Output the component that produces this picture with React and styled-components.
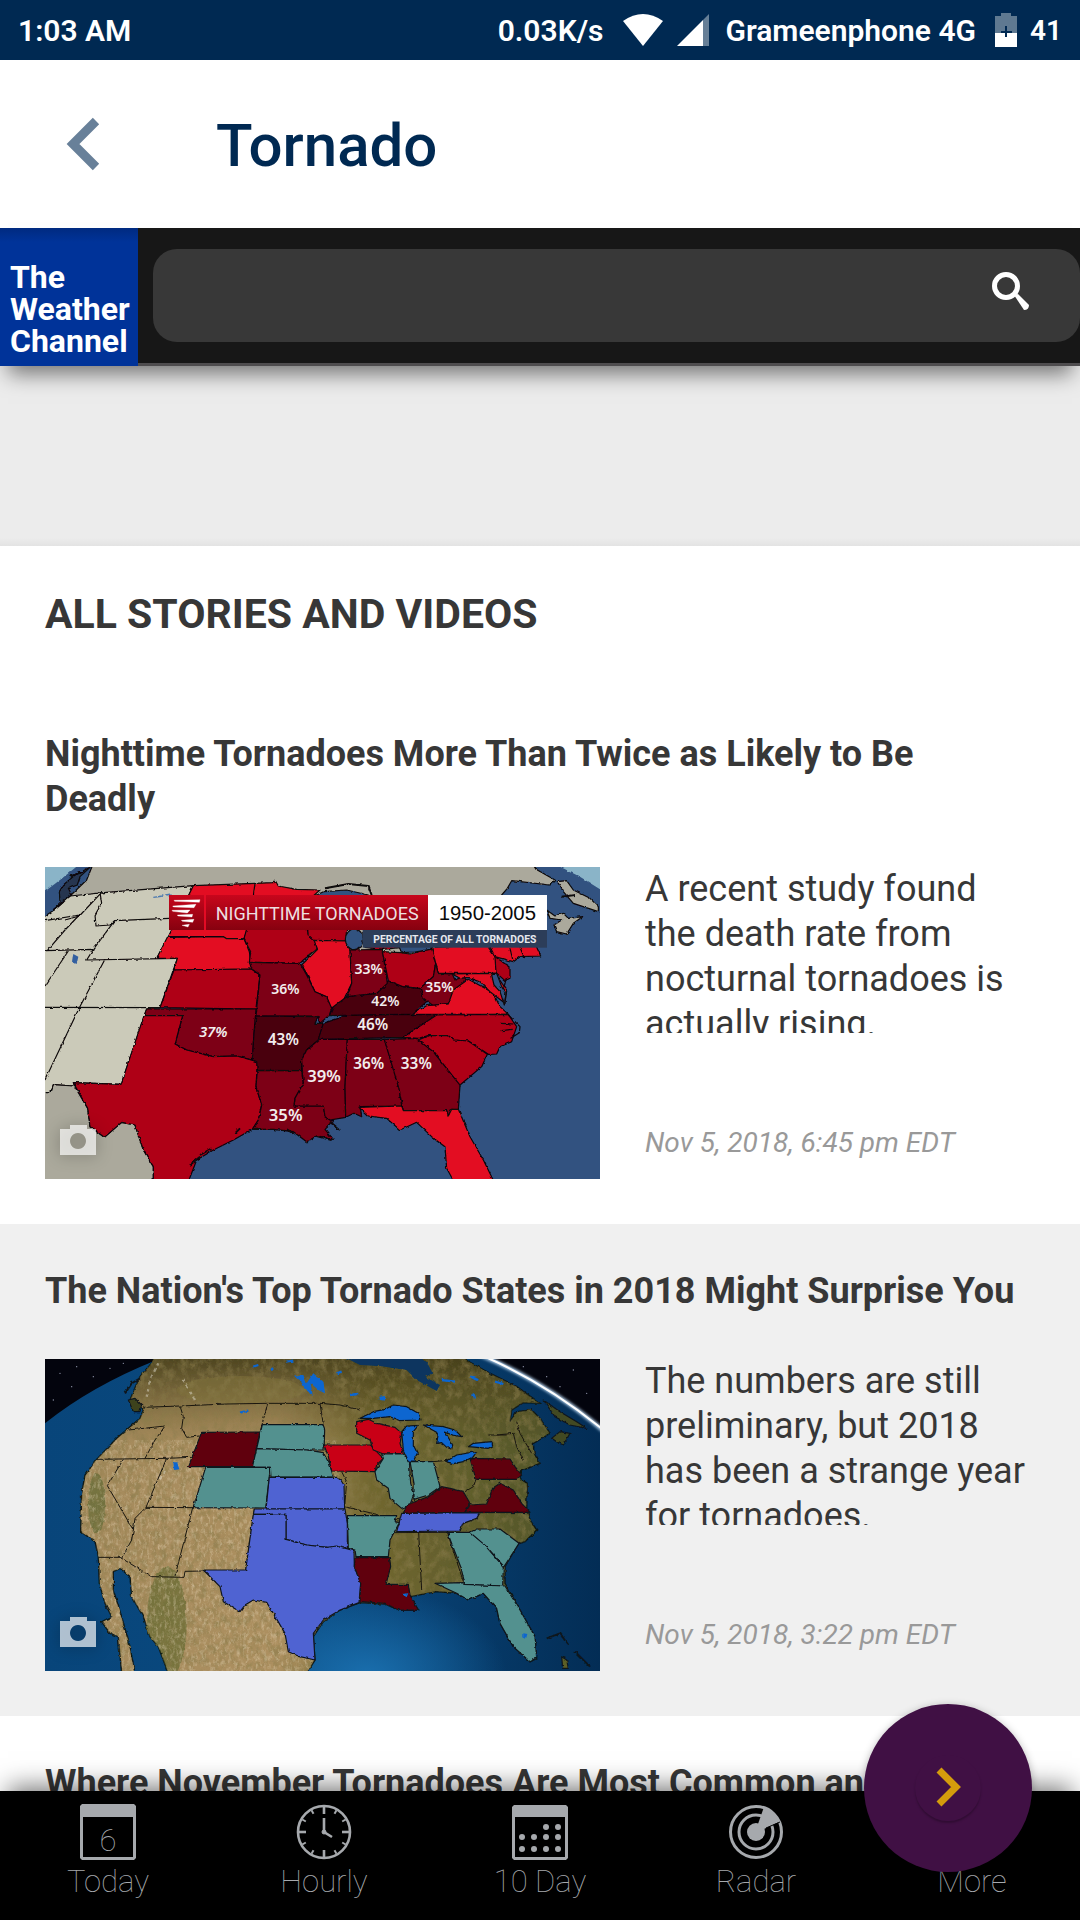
import React from "react";
import styled, { createGlobalStyle } from "styled-components";

const GlobalStyle = createGlobalStyle`
  *, *::before, *::after { box-sizing: border-box; }
  body { margin: 0; background: #fff; font-family: Roboto, "Liberation Sans", sans-serif; color: #373737; }
  h1, h2, h3, p { margin: 0; }
  a { color: inherit; text-decoration: none; }
  button { padding: 0; border: 0; background: none; cursor: pointer; font: inherit; }
  svg { display: block; }
`;

const Screen = styled.div`
  display: flex;
  flex-direction: column;
  height: 100vh;
`;

const StatusBar = styled.div`
  flex: none;
  display: flex;
  align-items: center;
  justify-content: space-between;
  height: 60px;
  padding: 0 18px;
  background: #002952;
  color: #fff;
  font-size: 30px;
  font-weight: 600;
  line-height: 38px;
`;

const StatusGroup = styled.div`
  display: flex;
  align-items: center;
`;

const StatusText = styled.span`
  margin-left: ${(p) => p.$gap || 0}px;
  padding-top: 2px;
  font-size: ${(p) => (p.$small ? 28 : 30)}px;
`;

const StatusIcon = styled.svg`
  margin-left: ${(p) => p.$gap}px;
`;

const AppBar = styled.div`
  flex: none;
  display: flex;
  align-items: center;
  gap: 93px;
  height: 168px;
  padding: 0 43px;
`;

const BackButton = styled.button`
  display: flex;
  align-items: center;
  justify-content: center;
  width: 80px;
  height: 80px;
`;

const Title = styled.h1`
  padding-top: 4px;
  color: #002952;
  font-size: 60px;
  font-weight: 500;
  line-height: 72px;
`;

const SiteHeader = styled.header`
  flex: none;
  position: relative;
  z-index: 1;
  display: flex;
  height: 138px;
  box-shadow: 0 16px 20px -8px rgba(0, 0, 0, 0.5);
`;

const Brand = styled.a`
  flex: none;
  display: flex;
  align-items: flex-end;
  width: 138px;
  padding: 0 0 9px 10px;
  background: linear-gradient(#002a80, #003399 14px);
  color: #fff;
  font-size: 32px;
  font-weight: 700;
  line-height: 32px;
`;

const SearchBar = styled.form`
  flex: 1;
  padding: 21px 0 18px 15px;
  background: #171717;
  border-bottom: 3px solid #4f4d4f;
`;

const SearchField = styled.div`
  display: flex;
  align-items: center;
  height: 93px;
  padding-right: 49px;
  background: #383838;
  border-radius: 24px;
`;

const SearchInput = styled.input`
  flex: 1;
  min-width: 0;
  height: 93px;
  padding: 0 24px;
  border: 0;
  outline: 0;
  background: none;
  color: #fff;
  font: 36px Roboto, sans-serif;
`;

const SearchButton = styled.button`
  padding-bottom: 10px;
`;

const Content = styled.main`
  flex: 1;
  min-height: 0;
  overflow-y: auto;
  scrollbar-width: none;
`;

const AdSlot = styled.div`
  height: 180px;
  background: linear-gradient(#ececec 172px, #e3e3e3);
`;

const SectionTitle = styled.h2`
  padding: 44px 45px 49px;
  font-size: 41px;
  font-weight: 700;
  line-height: 48px;
  text-transform: uppercase;
`;

const Story = styled.article`
  display: flex;
  flex-direction: column;
  gap: 45px;
  padding: 45px;
  background: ${(p) => (p.$shaded ? "#f0f0f0" : "#fff")};
`;

const StoryTitle = styled.h3`
  padding-right: 12px;
  font-size: 36px;
  font-weight: 700;
  line-height: 45px;
`;

const StoryBody = styled.div`
  display: grid;
  grid-template-columns: 37fr 26fr;
  gap: 45px;
`;

const Thumb = styled.a`
  position: relative;
  display: block;
`;

const Map = styled.svg`
  width: 100%;
  height: auto;
`;

const CameraBadge = styled.svg`
  position: absolute;
  left: 15px;
  bottom: 24px;
  filter: drop-shadow(0 1px 8px rgba(0, 0, 0, 0.35));
`;

const StoryText = styled.div`
  display: flex;
  flex-direction: column;
  justify-content: space-between;
  padding-bottom: 18px;
`;

const Summary = styled.p`
  height: 166px;
  overflow: hidden;
  font-size: 36px;
  line-height: 45px;
`;

const Stamp = styled.time`
  color: #999;
  font-size: 28px;
  font-style: italic;
  line-height: 36px;
`;

const TabBar = styled.nav`
  flex: none;
  position: relative;
  display: grid;
  grid-template-columns: repeat(5, 1fr);
  height: 129px;
  background: #000;
  box-shadow: 0 -12px 24px -8px rgba(0, 0, 0, 0.55);
`;

const Tab = styled.a`
  display: flex;
  flex-direction: column;
  align-items: center;
  gap: 4px;
  padding-top: 13px;
  color: #a6a9ad;
  font-size: 31px;
  font-weight: 100;
  line-height: 36px;
`;

const Fab = styled.button`
  position: fixed;
  right: 48px;
  bottom: 48px;
  display: flex;
  align-items: center;
  justify-content: center;
  width: 168px;
  height: 168px;
  border-radius: 50%;
  background: #401044;
  box-shadow: 0 2px 8px rgba(0, 0, 0, 0.3);
`;

const FabCore = styled.span`
  display: flex;
  align-items: center;
  justify-content: center;
  width: 66px;
  height: 66px;
  border-radius: 50%;
  box-shadow: 0 2px 2px rgba(0, 0, 0, 0.25);
`;

const P = ({ d, f }) => <polygon points={d} fill={f} />;

const BRIGHT = "#e30b24";
const MID = "#af0517";
const DARK = "#7d0212";
const DEEP = "#4a0009";
const PALE = "#cbcab9";
const GREY = "#aba99c";

const nightShapes = [
  [GREY, "158,15 1480,15 1488,28 1545,60 1530,75 1415,62 1402,85 1385,105 1330,290 700,290 90,108 140,60"],
  [PALE, "90,108 200,97 460,77 385,232 350,295 412,295 360,443 320,447 243,673 100,668 103,678 40,674 33,695 10,695 10,172 50,145"],
  [GREY, "10,695 33,695 40,674 103,678 143,745 150,800 193,832 245,787 285,795 310,870 340,920 340,965 10,965"],
  [BRIGHT, "460,77 645,70 700,68 705,60 715,78 770,88 840,90 800,125 800,212 620,212 612,236 560,236 550,230 385,230"],
  [BRIGHT, "382,232 550,230 560,236 612,236 628,275 635,327 402,330 412,295 350,295"],
  [MID, "402,330 635,327 660,345 648,447 360,443"],
  [DARK, "320,447 648,447 642,520 637,600 590,588 520,590 440,570 405,552 428,467 312,467"],
  [MID, "312,467 428,467 405,552 440,570 520,590 590,588 652,605 648,680 665,735 655,780 637,808 580,840 520,870 470,900 445,965 340,965 340,920 310,870 285,795 245,787 193,832 150,800 143,745 100,668 243,673"],
  [MID, "622,200 800,200 805,225 833,245 830,268 790,300 780,310 628,307 632,275 612,236"],
  [MID, "800,190 920,190 918,243 822,241 805,225"],
  [BRIGHT, "822,241 918,243 930,270 935,370 915,410 905,440 870,443 860,410 825,395 800,340 785,315 833,268"],
  [DARK, "628,307 780,310 800,345 825,395 860,410 875,445 868,465 840,490 830,468 648,468 660,345 635,327"],
  [DEEP, "648,468 835,470 825,490 850,490 835,540 800,570 785,600 785,632 652,631 650,605 637,600 642,520"],
  [DARK, "652,631 785,632 790,670 765,715 762,738 850,738 855,770 880,785 855,808 880,838 830,828 800,845 760,815 700,808 637,808 655,780 665,735 648,680"],
  [DARK, "838,538 922,538 915,680 917,772 870,780 855,770 850,738 762,738 765,715 790,670 785,600 800,570"],
  [DARK, "922,538 1033,538 1075,670 1085,738 960,740 965,770 942,760 917,772 915,680"],
  [DARK, "1033,538 1135,535 1180,575 1260,675 1255,750 1235,748 1225,768 1220,752 1090,752 1075,680"],
  [BRIGHT, "957,742 1085,738 1090,752 1220,752 1225,768 1235,748 1255,748 1290,830 1330,900 1362,965 1242,965 1220,925 1215,860 1175,830 1130,787 1080,810 1040,775 985,768"],
  [DEEP, "850,490 925,465 1190,463 1185,480 1130,505 1090,532 835,538"],
  [DEEP, "868,467 880,440 920,410 1010,400 1045,362 1090,380 1140,385 1160,425 1117,462"],
  [MID, "970,200 1080,200 1090,262 1027,268 975,262"],
  [DARK, "930,270 1027,268 1042,370 1010,400 960,405 920,410 935,370"],
  [MID, "1027,275 1080,278 1110,282 1175,265 1187,310 1180,350 1140,385 1090,380 1045,362"],
  [BRIGHT, "1175,262 1340,255 1365,290 1385,320 1365,340 1195,340"],
  [DARK, "1187,310 1195,340 1237,342 1245,360 1280,345 1265,380 1225,430 1180,437 1150,415 1140,385 1180,350"],
  [BRIGHT, "1117,462 1160,437 1225,432 1240,390 1285,358 1335,385 1360,400 1380,440 1405,463"],
  [BRIGHT, "1237,342 1365,340 1400,390 1395,430 1350,395 1320,365 1285,352 1260,355"],
  [MID, "1365,290 1410,320 1410,355 1395,362 1368,338"],
  [BRIGHT, "1340,240 1480,240 1502,288 1440,290 1420,305 1365,290"],
  [MID, "1190,465 1405,463 1430,500 1415,545 1380,560 1370,582 1345,583 1285,543 1240,540 1225,527 1165,527 1135,535 1090,532 1130,505"],
  [MID, "1135,540 1165,527 1225,527 1240,540 1285,543 1342,583 1325,620 1260,675 1180,575"],
  [GREY, "1552,65 1580,62 1600,90 1650,115 1675,140 1675,155 1600,130 1570,95"],
  [GREY, "1520,150 1545,168 1570,160 1585,175 1628,170 1600,190 1580,222 1550,215 1542,195 1565,180 1530,175"],
];

const nightLines = [
  "15,272 160,268 140,300 412,295",
  "75,180 118,168 185,97", "22,272 75,210 118,165 15,182",
  "180,97 185,130 165,165 168,198 210,195 224,182",
  "160,268 224,182 388,175", "85,273 15,378", "195,298 118,443 15,660", "15,442 360,443",
  "645,70 640,105", "1410,265 1418,298", "1440,262 1452,292", "1400,350 1390,390",
];

const nightLabels = [
  [736, 402, "36%"], [730, 556, "43%", 46], [852, 667, "39%", 50], [737, 782, "35%", 50],
  [986, 341, "33%"], [1036, 437, "42%"], [1198, 395, "35%"], [998, 510, "46%", 46],
  [986, 627, "36%", 46], [1129, 627, "33%", 46],
];

function NightMap() {
  return (
    <Map viewBox="15 21 1665 936" role="img" aria-label="Share of nighttime tornadoes by state, 1950 to 2005">
      <defs>
        <filter id="coast" x="0" y="0" width="1" height="1">
          <feTurbulence type="fractalNoise" baseFrequency="0.07" numOctaves="2" seed="4" />
          <feDisplacementMap in="SourceGraphic" scale="9" xChannelSelector="R" yChannelSelector="G" />
        </filter>
        <linearGradient id="banner" x1="0" y1="0" x2="0" y2="1">
          <stop offset="0" stopColor="#c8061c" />
          <stop offset="1" stopColor="#86010f" />
        </linearGradient>
      </defs>
      <rect x="15" y="21" width="1665" height="936" fill="#325280" />
      <g filter="url(#coast)">
        <P d="0,10 122,10 60,60 0,105" f="#8ab4c8" />
        <P d="1540,10 1700,10 1700,100 1620,50" f="#8ab4c8" />
        <g stroke="#0d0708" strokeWidth="3.5" strokeLinejoin="round">
          {nightShapes.map(([f, d], i) => <P key={i} f={f} d={d} />)}
          {nightLines.map((d, i) => <polyline key={i} points={d} fill="none" />)}
          <ellipse cx="943" cy="238" rx="27" ry="31" fill="#325280" />
          <P d="1075,255 1175,255 1172,268 1125,276 1085,278" f="#325280" />
          <P d="800,120 850,95 920,90 985,105 1000,125" f="#325280" />
          <P d="1355,345 1370,340 1385,380 1398,400 1393,435 1380,395 1362,375" f="#325280" />
          <path d="M1405 465 L1440 500 L1438 518 L1412 535 M1380 490 L1420 492 M1385 512 L1418 508" fill="none" />
          <P d="70,75 105,45 150,22 120,50 112,75 85,85 95,105 60,130 58,95" f="#26364f" />
          <path d="M40 150 L70 125 M88 50 L130 35 M855 85 L925 72 L985 78 L995 105 M1565 110 L1605 105 M870 785 L900 810 M830 828 L875 840 M480 885 L515 865 M450 915 L480 890 M585 820 L600 805 M740 808 L760 820" fill="none" strokeWidth="6" />
        </g>
        <P d="100,282 115,290 110,312 96,305 98,292" f="#325fa0" />
        <path d="M340 112 L370 108 M376 105 L395 102" stroke="#4d7ab0" strokeWidth="4" />
      </g>
      <rect x="387" y="105" width="105" height="105" fill="url(#banner)" />
      <rect x="492" y="105" width="6" height="105" fill={BRIGHT} />
      <rect x="498" y="105" width="666" height="105" fill="url(#banner)" />
      <rect x="1164" y="105" width="357" height="105" fill="#fff" />
      <rect x="968" y="210" width="553" height="53" fill="#2c3d59" />
      <path d="M402 121 L480 119 L478 127 L404 124 Z M398 138 L468 133 L462 143 L400 141 Z M396 151 L450 150 L442 159 L398 154 Z M412 165 L458 163 L456 171 L414 168 Z M424 181 L462 178 L458 187 L427 184 Z M426 196 L448 193 L444 201 Z" fill="#fff" stroke="#fff" strokeWidth="1" />
      <g fontFamily="Roboto, sans-serif" fill="#fff">
        <text x="527" y="179" fontSize="54" fill="#eedfe0">NIGHTTIME TORNADOES</text>
        <text x="1000" y="249" fontSize="31" fontWeight="700" fill="#e6e8ee">PERCENTAGE OF ALL TORNADOES</text>
      </g>
      <text x="1342" y="181" fontSize="61" textAnchor="middle" fontFamily="Liberation Sans, sans-serif" fill="#0a0a0a">1950-2005</text>
      <g fontFamily="Noto Sans, sans-serif" fontWeight="600" fill="#f2eded" textAnchor="middle">
        {nightLabels.map(([x, y, t, s]) => (
          <text key={`${x}-${y}`} x={x} y={y} fontSize={s || 42}>{t}</text>
        ))}
        <text x="520" y="532" fontSize="44" fontStyle="italic">37%</text>
      </g>
    </Map>
  );
}

const LAND = "345,20 330,45 300,80 282,120 270,150 285,180 312,175 300,205 265,235 230,265 170,328 135,375 125,430 122,545 165,575 175,620 178,700 195,760 215,800 185,815 210,850 235,860 245,970 285,970 270,890 245,800 220,720 220,665 240,655 270,680 275,740 310,800 330,860 355,890 385,970 800,970 825,930 820,860 850,815 900,780 960,758 1035,762 1075,780 1135,780 1110,740 1190,725 1250,730 1285,750 1330,730 1370,775 1380,820 1420,890 1470,935 1490,925 1485,860 1440,780 1395,700 1395,650 1435,580 1455,575 1490,540 1470,510 1460,480 1462,400 1440,385 1445,362 1500,340 1482,310 1480,280 1530,250 1500,205 1475,180 1430,185 1410,215 1415,180 1450,158 1500,160 1430,110 1340,65 1260,20";
const TEAL = "#53918f";
const BLUE = "#4f63d2";
const WINE = "#60000a";
const RED = "#c90012";
const LAKE = "#0b66d0";

const stateShapes = [
  [WINE, "485,247 660,246 637,350 445,350"],
  [TEAL, "667,224 848,224 854,240 852,300 800,300 650,296"],
  [TEAL, "650,296 800,300 850,308 870,345 880,381 693,381 691,352 637,351"],
  [TEAL, "497,352 691,352 677,474 460,473"],
  [BLUE, "688,382 890,382 902,390 912,405 914,477 678,477"],
  [BLUE, "643,477 915,477 922,520 922,595 860,592 800,585 738,568 738,493 640,493"],
  [BLUE, "640,493 738,493 738,568 800,585 860,592 890,588 942,602 943,650 962,700 957,758 900,780 850,810 820,850 825,930 780,920 745,905 735,850 700,790 680,757 640,750 615,765 600,785 550,755 540,710 490,660 617,660"],
  [RED, "852,285 992,285 1010,305 1030,325 1010,345 1005,365 875,363 865,320"],
  [RED, "950,215 985,208 1010,220 1065,232 1085,250 1080,280 1090,310 1030,312 1000,300 990,270 950,250"],
  [TEAL, "1025,312 1090,312 1108,335 1112,400 1122,430 1110,465 1085,475 1050,445 1045,415 1010,390 1005,365 1030,325"],
  [TEAL, "1110,335 1180,335 1200,410 1165,435 1122,448 1122,400"],
  [WINE, "1090,490 1100,465 1165,440 1205,410 1230,415 1270,425 1290,460 1275,487"],
  [WINE, "1275,487 1290,465 1340,462 1358,415 1380,400 1420,420 1445,460 1470,487"],
  [WINE, "1290,325 1410,327 1425,350 1445,375 1430,388 1308,388"],
  [BLUE, "1085,490 1320,488 1310,505 1270,520 1260,543 1070,545"],
  [TEAL, "922,497 1070,497 1065,515 1078,518 1050,570 1045,620 948,620 945,600 925,595"],
  [WINE, "945,623 1048,623 1052,650 1038,703 1105,703 1110,735 1135,780 1075,780 1035,760 960,755 962,700 943,650"],
  [TEAL, "1222,547 1290,547 1330,580 1390,650 1388,708 1275,703 1262,650"],
  [TEAL, "1290,547 1310,537 1380,537 1400,552 1437,580 1392,650 1340,590"],
  [TEAL, "1185,700 1270,698 1275,703 1395,708 1440,780 1485,860 1490,925 1470,935 1420,890 1380,820 1370,775 1330,730 1285,750 1250,730"],
  [LAKE, "960,205 1000,185 1035,178 1060,165 1100,170 1135,190 1140,210 1080,212 1050,200 1000,205"],
  [LAKE, "1085,245 1100,228 1135,226 1120,245 1120,285 1132,310 1120,333 1105,333 1090,300"],
  [LAKE, "1150,225 1210,230 1245,240 1265,260 1235,255 1215,245 1238,285 1235,298 1220,292 1205,278 1190,280 1195,250"],
  [LAKE, "1217,335 1250,315 1310,305 1300,320 1270,335 1240,341"],
  [LAKE, "1285,290 1300,280 1355,275 1358,288 1345,295"],
];

const stateLines = [
  "310,172 420,168 560,162 680,160 840,160 900,165 960,180",
  "265,240 375,228 345,270 315,325", "170,328 380,325 455,322", "420,168 430,200 425,235 440,262 478,258",
  "250,328 202,407 280,540 275,570 245,625", "175,622 240,622 335,680 432,682 435,664 490,663",
  "280,540 285,505 318,472 460,473", "380,325 318,472", "458,473 405,678", "683,160 660,247",
  "643,477 617,660", "840,160 850,224", "852,285 852,250", "905,365 920,395 914,470 1080,510",
  "1136,548 1145,720", "1222,547 1270,695", "1180,335 1290,325", "1308,388 1300,410 1275,425",
  "1048,548 1222,547", "1320,488 1460,488", "1370,255 1420,250 1430,290 1450,330", "1430,215 1440,250 1475,310", "1345,255 1400,255",
];

function GlobeMap() {
  return (
    <Map viewBox="15 27 1665 936" role="img" aria-label="Tornado counts by state in 2018">
      <defs>
        <linearGradient id="sea" x1="0" y1="0" x2="1" y2="0">
          <stop offset="0" stopColor="#08457a" />
          <stop offset="0.5" stopColor="#0a4a80" />
          <stop offset="1" stopColor="#032c54" />
        </linearGradient>
        <radialGradient id="gulf">
          <stop offset="0" stopColor="#1a6fae" />
          <stop offset="1" stopColor="#1a6fae" stopOpacity="0" />
        </radialGradient>
        <linearGradient id="land" x1="0" y1="0" x2="1" y2="0">
          <stop offset="0" stopColor="#a48a5c" />
          <stop offset="0.42" stopColor="#ad9060" />
          <stop offset="0.62" stopColor="#71672f" />
          <stop offset="1" stopColor="#52562a" />
        </linearGradient>
        <linearGradient id="north" x1="0" y1="0" x2="0" y2="1">
          <stop offset="0" stopColor="#463f1b" stopOpacity="0.95" />
          <stop offset="1" stopColor="#5b5124" stopOpacity="0" />
        </linearGradient>
        <clipPath id="landClip"><polygon points={LAND} /></clipPath>
        <filter id="terrain" x="0" y="0" width="1" height="1">
          <feTurbulence type="fractalNoise" baseFrequency="0.05 0.035" numOctaves="5" seed="11" />
          <feColorMatrix values="0 0 0 0 0.25  0 0 0 0 0.2  0 0 0 0 0.07  2.4 0 0 0 -0.95" />
        </filter>
        <filter id="ridge" x="0" y="0" width="1" height="1">
          <feTurbulence type="fractalNoise" baseFrequency="0.11 0.06" numOctaves="4" seed="5" />
          <feColorMatrix values="0 0 0 0 0.85  0 0 0 0 0.74  0 0 0 0 0.55  0 2 0 0 -0.9" />
        </filter>
        <filter id="shore" x="0" y="0" width="1" height="1">
          <feTurbulence type="fractalNoise" baseFrequency="0.07" numOctaves="2" seed="8" />
          <feDisplacementMap in="SourceGraphic" scale="9" xChannelSelector="R" yChannelSelector="G" />
        </filter>
        <filter id="glow" x="-0.1" y="-0.1" width="1.2" height="1.2"><feGaussianBlur stdDeviation="4" /></filter>
      </defs>
      <rect x="15" y="27" width="1665" height="936" fill="#03040d" />
      <path d="M10 224 Q150 110 350 30 L420 0 L1300 0 Q1520 90 1700 250 L1700 980 L10 980 Z" fill="url(#sea)" />
      <ellipse cx="980" cy="980" rx="420" ry="270" fill="url(#gulf)" />
      <path d="M1310 10 Q1520 96 1700 250" fill="none" stroke="#b9d6f0" strokeWidth="12" filter="url(#glow)" />
      <path d="M1320 14 Q1520 98 1700 248" fill="none" stroke="#fff" strokeWidth="6" />
      <g filter="url(#shore)">
        <polygon points={LAND} fill="url(#land)" stroke="#0c1512" strokeWidth="4" />
        <g clipPath="url(#landClip)">
          <rect x="15" y="20" width="1665" height="260" fill="url(#north)" />
          <ellipse cx="600" cy="120" rx="190" ry="42" fill="#7d6f3a" opacity="0.6" />
          <ellipse cx="380" cy="820" rx="60" ry="170" fill="#4f5f22" opacity="0.55" />
          <ellipse cx="170" cy="460" rx="26" ry="90" fill="#52622c" opacity="0.6" />
          <rect x="15" y="20" width="1665" height="950" filter="url(#terrain)" opacity="0.6" />
          <rect x="100" y="270" width="800" height="700" filter="url(#ridge)" opacity="0.5" />
          <path d="M355 40 L330 90 L320 140 M430 90 L465 150 M375 365 L350 400" stroke="#e6e4da" strokeWidth="7" strokeDasharray="7 9 12 14" opacity="0.45" fill="none" />
        </g>
        <P d="910,20 960,45 1020,48 1100,60 1130,90 1190,123 1200,105 1155,80 1178,70 1165,45 1140,20" f="#07365f" />
        <g fill="none" stroke="#1a1710" strokeWidth="3">
          {stateLines.map((d, i) => <polyline key={i} points={d} />)}
        </g>
        <g stroke="#10151c" strokeWidth="3.5" strokeLinejoin="round">
          {stateShapes.map(([f, d], i) => <P key={i} f={f} d={d} />)}
          <P d="265,150 285,145 305,165 300,185 280,185" f="#3c421d" />
          <P d="1510,150 1560,185 1610,215 1640,235 1590,225 1545,200" f="#434a22" />
          <P d="1535,265 1560,245 1590,250 1570,285 1550,275" f="#434a22" />
          <P d="1565,920 1580,930 1585,955 1568,955" f="#5c5f26" />
          <path d="M255 130 L275 100 L300 85 M1520 865 L1560 850 L1585 885 M1605 905 L1650 950" fill="none" strokeWidth="6" />
        </g>
        <g fill={LAKE}>
          <P d="400,335 412,338 418,358 402,360" />
          <P d="765,80 790,75 800,100 820,70 850,95 855,130 835,120 812,100 818,135 795,115 785,98" />
          <P d="1018,140 1035,138 1035,152 1020,150" />
          <P d="1450,850 1462,852 1458,866 1450,862" />
          <P d="1085,732 1105,730 1100,742" />
          <path d="M600 188 L625 182 M890 70 L905 65 M930 135 L955 132 M740 35 L760 32 M1205 90 L1245 95 M1290 80 L1315 90 M1365 95 L1390 102 M1300 130 L1305 145 M690 60 L700 55 M640 50 L655 45" stroke={LAKE} strokeWidth="7" fill="none" />
        </g>
      </g>
      <g fill="#cfd6f0" opacity="0.7">
        {[[60, 70], [110, 50], [95, 110], [160, 80], [40, 150], [210, 55], [1450, 50], [1520, 80], [1600, 60], [1640, 130], [1560, 110], [250, 40]].map(([x, y]) => (
          <circle key={`${x}-${y}`} cx={x} cy={y} r="2" />
        ))}
      </g>
    </Map>
  );
}

const Camera = () => (
  <CameraBadge width="36" height="30" viewBox="0 0 36 30" aria-hidden="true">
    <path fillRule="evenodd" fill="#fff" opacity="0.68" d="M0 4 H10 V0 H27 V4 H36 V30 H0 Z M18 8 a8 8 0 1 0 0.01 0 Z" />
  </CameraBadge>
);

const TodayIcon = () => (
  <svg width="56" height="56" viewBox="0 0 56 56" aria-hidden="true">
    <path fillRule="evenodd" fill="#a6a9ad" d="M2 0 H54 L56 2 V54 L54 56 H2 L0 54 V2 Z M3 13 V53 H53 V13 Z" />
    <text x="28" y="47" fontSize="31" fontWeight="100" textAnchor="middle" fontFamily="Roboto, sans-serif" fill="#a6a9ad">6</text>
  </svg>
);

const HourlyIcon = () => (
  <svg width="56" height="56" viewBox="0 0 56 56" fill="none" stroke="#a6a9ad" aria-hidden="true">
    <circle cx="28" cy="28" r="26" strokeWidth="2.6" />
    {Array.from({ length: 12 }, (_, i) => (
      <path key={i} strokeWidth={i % 3 ? 2 : 2.6} transform={`rotate(${i * 30} 28 28)`} d={i % 3 ? "M28 3 V7" : "M28 2 V10"} />
    ))}
    <path strokeWidth="2.6" d="M28 14 V28 L36 33" />
    <circle cx="28" cy="28" r="2" fill="#a6a9ad" />
  </svg>
);

const TenDayIcon = () => (
  <svg width="56" height="56" viewBox="0 0 56 56" fill="#a6a9ad" aria-hidden="true">
    <path fillRule="evenodd" d="M2 1 H54 L56 3 V54 L54 56 H2 L0 54 V3 Z M3 13 V53 H53 V13 Z" />
    {[[34, 23], [46, 23], [10, 33], [22, 33], [34, 33], [46, 33], [10, 45], [22, 45], [34, 45], [46, 45]].map(([x, y]) => (
      <circle key={`${x}-${y}`} cx={x} cy={y} r="3" />
    ))}
  </svg>
);

const RadarIcon = () => (
  <svg width="56" height="56" viewBox="0 0 56 56" fill="none" stroke="#a6a9ad" strokeWidth="3" aria-hidden="true">
    <circle cx="28" cy="28" r="25.5" />
    <circle cx="28" cy="28" r="17" />
    <circle cx="28" cy="28" r="9" fill="#a6a9ad" stroke="none" />
    <path d="M30 20 L36 3 Q47 8 51 18 L36 25 Z" fill="#a6a9ad" stroke="none" />
    <path d="M38 24 L52 18" stroke="#000" strokeWidth="1" />
  </svg>
);

const MoreIcon = () => (
  <svg width="56" height="56" viewBox="0 0 56 56" fill="#a6a9ad" aria-hidden="true">
    <circle cx="12" cy="28" r="4" /><circle cx="28" cy="28" r="4" /><circle cx="44" cy="28" r="4" />
  </svg>
);

const tabs = [
  ["Today", TodayIcon],
  ["Hourly", HourlyIcon],
  ["10 Day", TenDayIcon],
  ["Radar", RadarIcon],
  ["More", MoreIcon],
];

const stories = [
  { title: "Nighttime Tornadoes More Than Twice as Likely to Be Deadly", art: NightMap, text: "A recent study found the death rate from nocturnal tornadoes is actually rising.", time: "Nov 5, 2018, 6:45 pm EDT" },
  { title: "The Nation's Top Tornado States in 2018 Might Surprise You", art: GlobeMap, text: "The numbers are still preliminary, but 2018 has been a strange year for tornadoes.", time: "Nov 5, 2018, 3:22 pm EDT" },
  { title: "Where November Tornadoes Are Most Common and" },
];

export default function App() {
  return (
    <Screen>
      <GlobalStyle />
      <StatusBar>
        <StatusText>1:03 AM</StatusText>
        <StatusGroup>
          <StatusText>0.03K/s</StatusText>
          <StatusIcon $gap={19} width="40" height="32" viewBox="0 0 40 32" aria-hidden="true">
            <path d="M0 7 Q20 -7 40 7 L20 32 Z" fill="#fff" />
          </StatusIcon>
          <StatusIcon $gap={14} width="32" height="32" viewBox="0 0 32 32" aria-hidden="true">
            <path d="M26 6 L32 0 V32 H26 Z" fill="#667f97" />
            <path d="M0 32 L26 6 V32 Z" fill="#fff" />
          </StatusIcon>
          <StatusText $gap={17}>Grameenphone 4G</StatusText>
          <StatusIcon $gap={19} width="22" height="34" viewBox="0 0 22 34" aria-hidden="true">
            <path d="M0 3 H6 V0 H16 V3 H22 V20 H0 Z" fill="#5f7991" />
            <path d="M0 20 H22 V34 H0 Z" fill="#fff" />
            <path d="M11 13 V24 M6 19 H17" stroke="#002952" strokeWidth="2" />
          </StatusIcon>
          <StatusText $gap={13} $small>41</StatusText>
        </StatusGroup>
      </StatusBar>
      <AppBar>
        <BackButton type="button" aria-label="Back">
          <svg width="34" height="54" viewBox="0 0 34 54" fill="none" aria-hidden="true">
            <path d="M30 4 L7 27 L30 50" stroke="#688099" strokeWidth="9" />
          </svg>
        </BackButton>
        <Title>Tornado</Title>
      </AppBar>
      <SiteHeader>
        <Brand href="#home">The<br />Weather<br />Channel</Brand>
        <SearchBar role="search">
          <SearchField>
            <SearchInput type="text" aria-label="Search location" />
            <SearchButton type="button" aria-label="Search">
              <svg width="40" height="40" viewBox="0 0 40 40" fill="none" stroke="#fff" aria-hidden="true">
                <circle cx="15" cy="15" r="11.5" strokeWidth="5" />
                <path d="M23 24 L27 23 L38 34 Q38 39 33 39 Z" fill="#fff" stroke="none" />
              </svg>
            </SearchButton>
          </SearchField>
        </SearchBar>
      </SiteHeader>
      <Content>
        <AdSlot />
        <SectionTitle>All stories and videos</SectionTitle>
        {stories.map(({ title, art: Art, text, time }, i) => (
          <Story key={title} $shaded={i % 2 === 1}>
            <StoryTitle>{title}</StoryTitle>
            {Art && (
              <StoryBody>
                <Thumb href="#story" aria-label={title}>
                  <Art />
                  <Camera />
                </Thumb>
                <StoryText>
                  <Summary>{text}</Summary>
                  <Stamp>{time}</Stamp>
                </StoryText>
              </StoryBody>
            )}
          </Story>
        ))}
      </Content>
      <TabBar>
        {tabs.map(([label, Icon]) => (
          <Tab key={label} href={`#${label}`}>
            <Icon />
            <span>{label}</span>
          </Tab>
        ))}
      </TabBar>
      <Fab type="button" aria-label="Next">
        <FabCore>
          <svg width="26" height="44" viewBox="0 0 26 44" fill="none" aria-hidden="true">
            <path d="M4 4 L21 21 L4 38" stroke="#d49c0c" strokeWidth="7" />
          </svg>
        </FabCore>
      </Fab>
    </Screen>
  );
}
